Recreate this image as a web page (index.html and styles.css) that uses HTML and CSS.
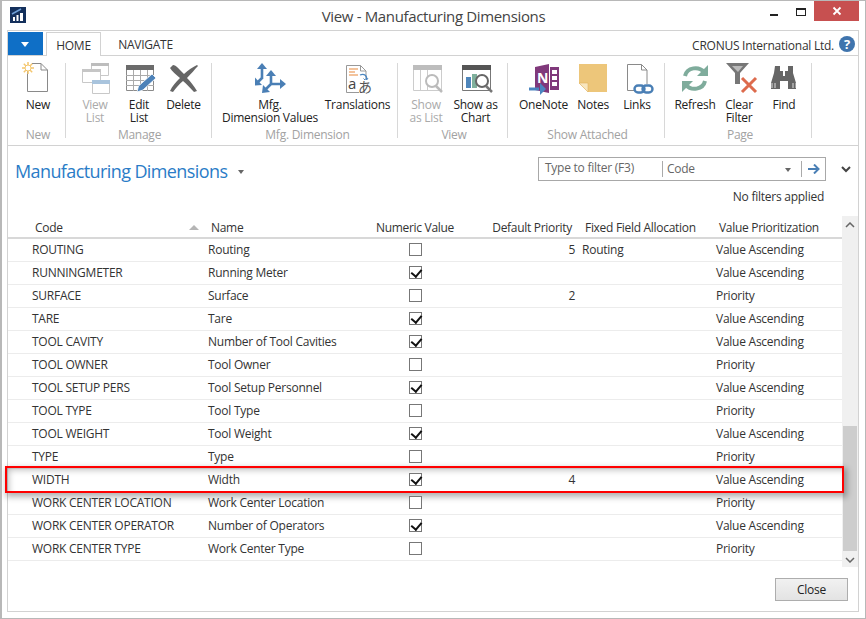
FILE: index.html
```html
<!DOCTYPE html>
<html lang="en">
<head>
    <meta charset="UTF-8">
    <title>View - Manufacturing Dimensions</title>
    <link rel="stylesheet" href="styles.css">
</head>
<body>
<div class="window">

    <div class="titlebar">
        <svg class="app-icon" width="16" height="16" viewBox="0 0 16 16">
            <rect width="16" height="16" fill="#14305c"/>
            <path d="M3 10h2v4H3zM6.500 8h2v6h-2zM10 6h3v8h-3z" fill="#fff"/>
            <path d="M2 7l9-5" stroke="#6fa0d8" stroke-width="1.500" fill="none"/>
        </svg>
        <div class="title">View - Manufacturing Dimensions</div>
        <div class="win-controls">
            <span class="win-min"></span>
            <span class="win-max"></span>
            <span class="win-close">
                <svg width="10" height="10" viewBox="0 0 10 10"><path d="M1.500 1.500l7 7M8.500 1.500l-7 7" stroke="#fff" stroke-width="1.800"/></svg>
            </span>
        </div>
    </div>

    <div class="frame">
        <div class="tabs">
            <div class="file-btn"></div>
            <div class="tab tab-active">HOME</div>
            <div class="tab">NAVIGATE</div>
            <div class="company">CRONUS International Ltd.</div>
            <div class="help">?</div>
        </div>

        <div class="ribbon">
            <div class="group group-new">
                <div class="rb">
                    <svg class="rb-icon" viewBox="0 0 40 34">
                        <path d="M9.500 8V30.500H29.500V9L23 2.500H14M23 2.500V9H29.500" fill="#fff" stroke="#8a8a8a"/>
                        <path d="M10 1v12M4 7h12M5.800 2.800l8.400 8.400M14.200 2.800l-8.400 8.400" stroke="#f4c66e" stroke-width="1.500"/>
                        <circle cx="10" cy="7" r="3" fill="#fff" stroke="#f4c66e"/>
                    </svg>
                    New
                </div>
                <div class="group-label">New</div>
            </div>

            <div class="group group-manage">
                <div class="rb rb-off">
                    <svg class="rb-icon" viewBox="0 0 40 34">
                        <path d="M16.500 2.500h17v12h-17z" fill="#fff" stroke="#c8c8c8"/><path d="M16 2h18v3H16z" fill="#bdbdbd"/>
                        <path d="M7.500 8.500h18v13h-18z" fill="#fff" stroke="#c8c8c8"/><path d="M7 8h19v3H7z" fill="#c6c6c6"/>
                        <path d="M17.500 19.500h17v13h-17z" fill="#fff" stroke="#c8c8c8"/><path d="M17 19h18v4H17z" fill="#a9c4dd"/>
                    </svg>
                    View<br>List
                </div>
                <div class="rb">
                    <svg class="rb-icon" viewBox="0 0 40 34">
                        <path d="M7.500 4.500h27v25h-27z" fill="#fff" stroke="#8a8a8a"/>
                        <path d="M7 4h28v5H7z" fill="#6b6b6b"/>
                        <path d="M7 14.500h28M7 19.500h28M7 24.500h28M14.500 9v21M21.500 9v21M28.500 9v21" stroke="#aaa"/>
                        <path d="M18 31l1.500-6L33 13l4 4-13 12z" fill="#4d82b8" stroke="#fff" stroke-width=".8"/>
                    </svg>
                    Edit<br>List
                </div>
                <div class="rb">
                    <svg class="rb-icon" viewBox="0 0 40 34">
                        <path d="M6 7l3-3c3 0 7 5 11 9 4-4 9-7 13-9l1 1c-3 3-7 8-11 12 4 4 7 8 10 13l-3 1c-4-4-7-8-11-11-4 3-7 7-10 11l-3-1c2-5 6-9 10-13-4-3-8-7-10-10z" fill="#666"/>
                    </svg>
                    Delete
                </div>
                <div class="group-label">Manage</div>
            </div>

            <div class="group group-dim">
                <div class="rb">
                    <svg class="rb-icon" viewBox="0 0 40 34">
                        <g stroke="#4a7fb5" stroke-width="2.600" fill="none">
                            <path d="M12 18V7M12 17l-4 4"/>
                            <path d="M21 23V14M21 23h10M21 23l-5 5"/>
                        </g>
                        <g fill="#4a7fb5">
                            <path d="M12 2l5 6H7z"/>
                            <path d="M5 24.500v-8l7 7.500z"/>
                            <path d="M21 9l5 6H16z"/>
                            <path d="M36 23l-6 5v-10z"/>
                            <path d="M12 32l1-8 7 7z"/>
                        </g>
                    </svg>
                    Mfg.<br>Dimension Values
                </div>
                <div class="rb">
                    <svg class="rb-icon" viewBox="0 0 40 34">
                        <path d="M8.500 4.500h14l5.500 5.500v21.500h-19.500z" fill="#fff" stroke="#999"/>
                        <path d="M22.500 4.500V10H28" fill="none" stroke="#999"/>
                        <path d="M11 8h9M11 11h6M11 14h9" stroke="#e8883a" stroke-width="1.200"/>
                        <path d="M22 14c4-2 8 1 6 5" fill="none" stroke="#4a85c0" stroke-width="1.300"/>
                        <path d="M25.500 17.500l2.500 2.500 2-3" fill="none" stroke="#4a85c0"/>
                        <rect x="21" y="19" width="17" height="14" fill="#fff"/>
                        <text x="10" y="28" class="glyph-a">a</text>
                        <text x="20" y="31" class="glyph-jp">あ</text>
                    </svg>
                    Translations
                </div>
                <div class="group-label">Mfg. Dimension</div>
            </div>

            <div class="group group-show">
                <div class="rb rb-off">
                    <svg class="rb-icon" viewBox="0 0 40 34">
                        <path d="M7.500 4.500h28v25h-28z" fill="#fff" stroke="#ccc"/>
                        <path d="M7 4h29v5H7z" fill="#bdbdbd"/>
                        <path d="M14.500 9v21M21.500 9v21" stroke="#ccc"/>
                        <circle cx="26" cy="20" r="6" fill="#fff" stroke="#bbb" stroke-width="2"/>
                        <path d="M30 25l6 6" stroke="#bbb" stroke-width="2.500"/>
                    </svg>
                    Show<br>as List
                </div>
                <div class="rb">
                    <svg class="rb-icon" viewBox="0 0 40 34">
                        <path d="M6.500 4.500h28v25h-28z" fill="#fff" stroke="#777"/>
                        <path d="M6 4h29v5H6z" fill="#555"/>
                        <path d="M10 16h5v11h-5z" fill="#4f86bb"/>
                        <path d="M16 13h5v14h-5z" fill="#7fb09c"/>
                        <circle cx="26" cy="20" r="6" fill="#fff" stroke="#666" stroke-width="2"/>
                        <path d="M30 25l6 6" stroke="#777" stroke-width="2.500"/>
                    </svg>
                    Show as<br>Chart
                </div>
                <div class="group-label">View</div>
            </div>

            <div class="group group-attach">
                <div class="rb">
                    <svg class="rb-icon" viewBox="0 0 40 34">
                        <path d="M11 6l14-3v29l-14-3z" fill="#80397b"/>
                        <path d="M26 6h9v23h-9z" fill="#80397b"/>
                        <path d="M28 9h5v4h-5zM28 15h5v4h-5zM28 21h5v4h-5z" fill="#fff"/>
                        <text x="13" y="22" class="glyph-n">N</text>
                        <path d="M5 28h10" stroke="#4a85c0" stroke-width="3"/>
                        <path d="M16 22l6 6-6 6z" fill="#4a85c0"/>
                    </svg>
                    OneNote
                </div>
                <div class="rb">
                    <svg class="rb-icon" viewBox="0 0 40 34">
                        <path d="M6 3h28v28H15l-9-9z" fill="#edc67a"/>
                        <path d="M6 22h9v9z" fill="#f8e6bf" stroke="#e0b460" stroke-width=".6"/>
                    </svg>
                    Notes
                </div>
                <div class="rb">
                    <svg class="rb-icon" viewBox="0 0 40 34">
                        <path d="M10.500 3.500h14l5.500 5.500v20.500h-19.500z" fill="#fff" stroke="#8a8a8a"/>
                        <path d="M24.500 3.500V9H30" fill="none" stroke="#8a8a8a"/>
                        <rect x="17" y="23" width="19" height="10" fill="#fff"/>
                        <rect x="17.500" y="24.500" width="10" height="7" rx="3.500" fill="none" stroke="#4a7fb5" stroke-width="2.400"/>
                        <rect x="25.500" y="24.500" width="10" height="7" rx="3.500" fill="none" stroke="#4a7fb5" stroke-width="2.400"/>
                    </svg>
                    Links
                </div>
                <div class="group-label">Show Attached</div>
            </div>

            <div class="group group-page">
                <div class="rb">
                    <svg class="rb-icon" viewBox="0 0 40 34">
                        <g fill="none" stroke="#7fac9c" stroke-width="4">
                            <path d="M10 15c2-9 14-10 19-4"/>
                            <path d="M30 20c-2 9-14 10-19 4"/>
                        </g>
                        <path d="M33 4v11H22z" fill="#7fac9c"/>
                        <path d="M7 31V20h11z" fill="#7fac9c"/>
                    </svg>
                    Refresh
                </div>
                <div class="rb">
                    <svg class="rb-icon" viewBox="0 0 40 34">
                        <path d="M6 2h23l-9 10v11h-5V12z" fill="#777"/>
                        <path d="M12 5h11l-5 6z" fill="#bbb"/>
                        <path d="M22 17l14 14M36 17l-14 14" stroke="#dd6b4d" stroke-width="3"/>
                    </svg>
                    Clear<br>Filter
                </div>
                <div class="rb">
                    <svg class="rb-icon" viewBox="0 0 40 34">
                        <path d="M11 5h5v5h3v5h2v-5h3V5h5v7l3 10v6H24V20h-8v8H7v-6l3-10z" fill="#666"/>
                        <path d="M8 22v5M11 22v5M29 22v5M32 22v5" stroke="#fff" stroke-width=".8"/>
                    </svg>
                    Find
                </div>
                <div class="group-label">Page</div>
            </div>
        </div>

        <div class="page">
            <div class="page-head">
                <div class="page-title">Manufacturing Dimensions <span class="caret"></span></div>
                <div class="filter">
                    <div class="filter-input">Type to filter (F3)</div>
                    <div class="filter-field">Code</div>
                    <div class="filter-drop"><span class="caret"></span></div>
                    <div class="filter-go">
                        <svg width="12" height="10" viewBox="0 0 12 10"><path d="M0 5h9" stroke="#4a7fb5" stroke-width="2"/><path d="M6 .5L10.500 5 6 9.500" fill="none" stroke="#4a7fb5" stroke-width="2"/></svg>
                    </div>
                </div>
                <svg class="chevron" width="10" height="7" viewBox="0 0 10 7"><path d="M1 1l4 4 4-4" fill="none" stroke="#444" stroke-width="2"/></svg>
                <div class="no-filters">No filters applied</div>
            </div>

            <div class="list">
                <table class="grid">
                    <colgroup>
                        <col class="col-code"><col class="col-name"><col class="col-num"><col class="col-pri"><col class="col-fixed"><col class="col-value">
                    </colgroup>
                    <thead>
                        <tr>
                            <th class="th-code">Code<span class="sort"></span></th>
                            <th>Name</th>
                            <th class="center">Numeric Value</th>
                            <th class="right">Default Priority</th>
                            <th>Fixed Field Allocation</th>
                            <th>Value Prioritization</th>
                        </tr>
                    </thead>
                    <tbody>
                        <tr><td>ROUTING</td><td>Routing</td><td class="center"><span class="cb"></span></td><td class="right">5</td><td>Routing</td><td>Value Ascending</td></tr>
                        <tr><td>RUNNINGMETER</td><td>Running Meter</td><td class="center"><span class="cb cb-on"></span></td><td class="right"></td><td></td><td>Value Ascending</td></tr>
                        <tr><td>SURFACE</td><td>Surface</td><td class="center"><span class="cb"></span></td><td class="right">2</td><td></td><td>Priority</td></tr>
                        <tr><td>TARE</td><td>Tare</td><td class="center"><span class="cb cb-on"></span></td><td class="right"></td><td></td><td>Value Ascending</td></tr>
                        <tr><td>TOOL CAVITY</td><td>Number of Tool Cavities</td><td class="center"><span class="cb cb-on"></span></td><td class="right"></td><td></td><td>Value Ascending</td></tr>
                        <tr><td>TOOL OWNER</td><td>Tool Owner</td><td class="center"><span class="cb"></span></td><td class="right"></td><td></td><td>Priority</td></tr>
                        <tr><td>TOOL SETUP PERS</td><td>Tool Setup Personnel</td><td class="center"><span class="cb cb-on"></span></td><td class="right"></td><td></td><td>Value Ascending</td></tr>
                        <tr><td>TOOL TYPE</td><td>Tool Type</td><td class="center"><span class="cb"></span></td><td class="right"></td><td></td><td>Priority</td></tr>
                        <tr><td>TOOL WEIGHT</td><td>Tool Weight</td><td class="center"><span class="cb cb-on"></span></td><td class="right"></td><td></td><td>Value Ascending</td></tr>
                        <tr><td>TYPE</td><td>Type</td><td class="center"><span class="cb"></span></td><td class="right"></td><td></td><td>Priority</td></tr>
                        <tr class="marked"><td>WIDTH<div class="red-box"></div></td><td>Width</td><td class="center"><span class="cb cb-on"></span></td><td class="right">4</td><td></td><td>Value Ascending</td></tr>
                        <tr><td>WORK CENTER LOCATION</td><td>Work Center Location</td><td class="center"><span class="cb"></span></td><td class="right"></td><td></td><td>Priority</td></tr>
                        <tr><td>WORK CENTER OPERATOR</td><td>Number of Operators</td><td class="center"><span class="cb cb-on"></span></td><td class="right"></td><td></td><td>Value Ascending</td></tr>
                        <tr><td>WORK CENTER TYPE</td><td>Work Center Type</td><td class="center"><span class="cb"></span></td><td class="right"></td><td></td><td>Priority</td></tr>
                    </tbody>
                </table>

                <div class="scrollbar">
                    <svg class="sb-arrow" width="10" height="6" viewBox="0 0 10 6"><path d="M1 5l4-4 4 4" fill="none" stroke="#666" stroke-width="1.500"/></svg>
                    <div class="sb-thumb"></div>
                    <svg class="sb-arrow" width="10" height="6" viewBox="0 0 10 6"><path d="M1 1l4 4 4-4" fill="none" stroke="#666" stroke-width="1.500"/></svg>
                </div>
            </div>

            <div class="page-foot">
                <button class="close-btn">Close</button>
            </div>
        </div>
    </div>
</div>
</body>
</html>
```

FILE: styles.css
```css
* {
    box-sizing: border-box;
}
html, body {
    margin: 0;
    padding: 0;
}
body {
    font-family: "Open Sans", "Noto Sans", Arial, sans-serif;
    font-size: 12px;
    letter-spacing: -0.25px;
    color: #222;
    background-color: #fff;
}
.window {
    width: 866px;
    height: 619px;
    border: 1px solid #b8b8b8;
    border-left-width: 2px;
    background-color: #fff;
    display: flex;
    flex-direction: column;
    overflow: hidden;
}

/* title bar */
.titlebar {
    height: 29px;
    flex: none;
    display: grid;
    grid-template-columns: 1fr auto 1fr;
    align-items: start;
}
.app-icon {
    margin: 6px 0 0 8px;
}
.title {
    font-size: 15px;
    letter-spacing: -0.35px;
    color: #444;
    margin-top: 5px;
}
.win-controls {
    display: flex;
    justify-content: flex-end;
    align-items: flex-start;
    margin-right: 6px;
}
.win-min {
    width: 8px;
    height: 2px;
    background-color: #222;
    margin-top: 13px;
    margin-right: 18px;
}
.win-max {
    width: 10px;
    height: 8px;
    border: 1px solid #222;
    border-top-width: 2px;
    margin-top: 7px;
    margin-right: 8px;
}
.win-close {
    width: 45px;
    height: 20px;
    background-color: #c75050;
    display: flex;
    align-items: center;
    justify-content: center;
}

/* main frame */
.frame {
    flex: 1;
    margin: 0 6px 6px 5px;
    border: 1px solid #d2d2d2;
    display: flex;
    flex-direction: column;
    min-height: 0;
}
.tabs {
    height: 25px;
    flex: none;
    padding-top: 1px;
    display: flex;
    align-items: stretch;
    border-bottom: 1px solid #d2d2d2;
}
.file-btn {
    width: 35px;
    margin-right: 3px;
    height: 23px;
    background-color: #0f6fc6;
    position: relative;
}
.file-btn::after {
    content: "";
    position: absolute;
    left: 13px;
    top: 10px;
    border: 4px solid transparent;
    border-top: 5px solid #fff;
    border-bottom: 0;
}
.tab {
    width: 89px;
    text-align: center;
    line-height: 25px;
    color: #333;
}
.tab-active {
    width: 55px;
    height: 24px;
    background-color: #fff;
    border: 1px solid #d2d2d2;
    border-bottom: 0;
}
.company {
    margin-left: auto;
    line-height: 28px;
    color: #333;
    margin-right: 5px;
}
.help {
    width: 16px;
    height: 16px;
    margin: 4px 3px 0 0;
    border-radius: 50%;
    background-color: #3f74ad;
    color: #fff;
    font-size: 13px;
    font-weight: bold;
    line-height: 16px;
    text-align: center;
}

/* ribbon */
.ribbon {
    height: 90px;
    flex: none;
    display: flex;
    align-items: flex-start;
    padding-top: 7px;
    border-bottom: 1px solid #d2d2d2;
}
.group {
    height: 75px;
    display: grid;
    grid-template-rows: 65px 13px;
    border-right: 1px solid #d8d8d8;
}
.group-new {
    width: 58px;
    padding-left: 7px;
    grid-template-columns: 46px;
}
.group-manage {
    width: 146px;
    padding-left: 7px;
    grid-template-columns: 44px 44px 45px;
}
.group-dim {
    width: 186px;
    padding-left: 8px;
    grid-template-columns: 100px 75px;
}
.group-show {
    width: 110px;
    padding-left: 3px;
    grid-template-columns: 50px 49px;
}
.group-show .group-label {
    padding-left: 7px;
}
.group-attach {
    width: 157px;
    padding-left: 6px;
    grid-template-columns: 59px 40px 48px;
}
.group-page {
    width: 147px;
    padding-left: 5px;
    grid-template-columns: 50px 38px 52px;
}
.rb {
    text-align: center;
    line-height: 13px;
    color: #222;
    white-space: nowrap;
}
.rb-icon {
    display: block;
    width: 40px;
    height: 34px;
    margin: -2px auto 3px;
}
.rb-off {
    color: #aaa;
}
.group-label {
    grid-column: 1 / -1;
    text-align: center;
    color: #a2a2a2;
    line-height: 13px;
    white-space: nowrap;
}
.glyph-a {
    font-family: "Open Sans", sans-serif;
    font-size: 15px;
    fill: #444;
}
.glyph-jp {
    font-family: "Noto Sans CJK JP", sans-serif;
    font-size: 14px;
    fill: #555;
}
.glyph-n {
    font-family: "Open Sans", sans-serif;
    font-size: 14px;
    font-weight: bold;
    fill: #fff;
}

/* page */
.page {
    flex: 1;
    min-height: 0;
    display: flex;
    flex-direction: column;
}
.page-head {
    height: 71px;
    flex: none;
    display: grid;
    grid-template-columns: 1fr 288px 32px;
    grid-template-rows: 24px 1fr;
    padding-top: 11px;
    align-items: center;
}
.page-title {
    font-size: 18px;
    letter-spacing: -0.6px;
    color: #2a7cc7;
    padding: 4px 0 0 7px;
}
.caret {
    display: inline-block;
    border: 3px solid transparent;
    border-top: 4px solid #666;
    border-bottom: 0;
    vertical-align: middle;
}
.page-title .caret {
    margin-left: 7px;
    margin-top: -3px;
}
.filter {
    height: 24px;
    border: 1px solid #a8a8a8;
    display: flex;
    align-items: center;
    color: #666;
}
.filter-input {
    width: 123px;
    padding-left: 6px;
    margin-top: -3px;
}
.filter-field {
    flex: 1;
    height: 16px;
    line-height: 16px;
    padding-left: 4px;
    border-left: 1px solid #aaa;
}
.filter-drop {
    width: 16px;
    line-height: 10px;
}
.filter-go {
    width: 24px;
    height: 16px;
    display: flex;
    align-items: center;
    justify-content: center;
    border-left: 1px solid #aaa;
}
.chevron {
    justify-self: center;
    margin-left: 8px;
}
.no-filters {
    grid-column: 1 / 3;
    text-align: right;
    padding-right: 2px;
    align-self: start;
    margin-top: 7px;
    color: #333;
}

/* list */
.list {
    display: flex;
    align-items: flex-start;
    margin-top: -1px;
}
.grid {
    width: 834px;
    table-layout: fixed;
    border-collapse: collapse;
    margin-top: 1px;
}
.col-code { width: 196px; }
.col-name { width: 168px; }
.col-num { width: 86px; }
.col-pri { width: 120px; }
.col-fixed { width: 134px; }
.col-value { width: 130px; }
.grid th {
    height: 21px;
    font-weight: normal;
    text-align: left;
    padding: 0 0 0 7px;
    letter-spacing: -0.3px;
    color: #333;
    border-bottom: 2px solid #d8d8d8;
    white-space: nowrap;
}
.grid th.th-code {
    padding-left: 27px;
    position: relative;
}
.grid th.right {
    text-align: right;
    padding-right: 6px;
}
.grid th.center {
    text-align: center;
    padding-left: 0;
}
.sort {
    position: absolute;
    left: 181px;
    top: 8px;
    border: 5px solid transparent;
    border-bottom: 5px solid #b5b5b5;
    border-top: 0;
}
.grid td {
    height: 23px;
    padding: 0 0 0 4px;
    color: #333;
    border-bottom: 1px solid #ececec;
    white-space: nowrap;
}
.grid td:first-child {
    padding-left: 24px;
    position: relative;
}
.grid td.right {
    text-align: right;
    padding-right: 3px;
}
.grid td.center {
    text-align: center;
    padding-left: 0;
}
.cb {
    display: inline-block;
    width: 13px;
    height: 13px;
    border: 1px solid #777;
    vertical-align: middle;
    margin-bottom: 2px;
    position: relative;
    background-color: #fff;
}
.cb-on::after {
    content: "";
    position: absolute;
    left: 3px;
    top: 0;
    width: 5px;
    height: 8px;
    border: solid #111;
    border-width: 0 2px 2px 0;
    transform: rotate(40deg);
}
.red-box {
    position: absolute;
    left: -3px;
    top: -3px;
    width: 839px;
    height: 27px;
    border: 2px solid #ff0000;
    box-shadow: 2px 3px 6px 1px rgba(0, 0, 0, 0.3), inset 4px 4px 6px -2px rgba(0, 0, 0, 0.25);
    pointer-events: none;
}
.scrollbar {
    width: 16px;
    height: 351px;
    background-color: #f0f0f0;
    display: flex;
    flex-direction: column;
    align-items: center;
    padding-top: 6px;
}
.sb-arrow {
    flex: none;
}
.sb-thumb {
    width: 14px;
    height: 125px;
    margin-top: auto;
    background-color: #cdcdcd;
}
.scrollbar .sb-arrow:last-child {
    margin: 6px 0 4px;
}

/* footer */
.page-foot {
    flex: 1;
    display: flex;
    justify-content: flex-end;
    align-items: flex-start;
    padding: 11px 10px 0 0;
}
.close-btn {
    width: 73px;
    height: 23px;
    font-family: inherit;
    font-size: 12px;
    letter-spacing: -0.25px;
    color: #222;
    border: 1px solid #adadad;
    background: linear-gradient(#f1f1f1, #e3e3e3);
    padding: 0;
}
```
